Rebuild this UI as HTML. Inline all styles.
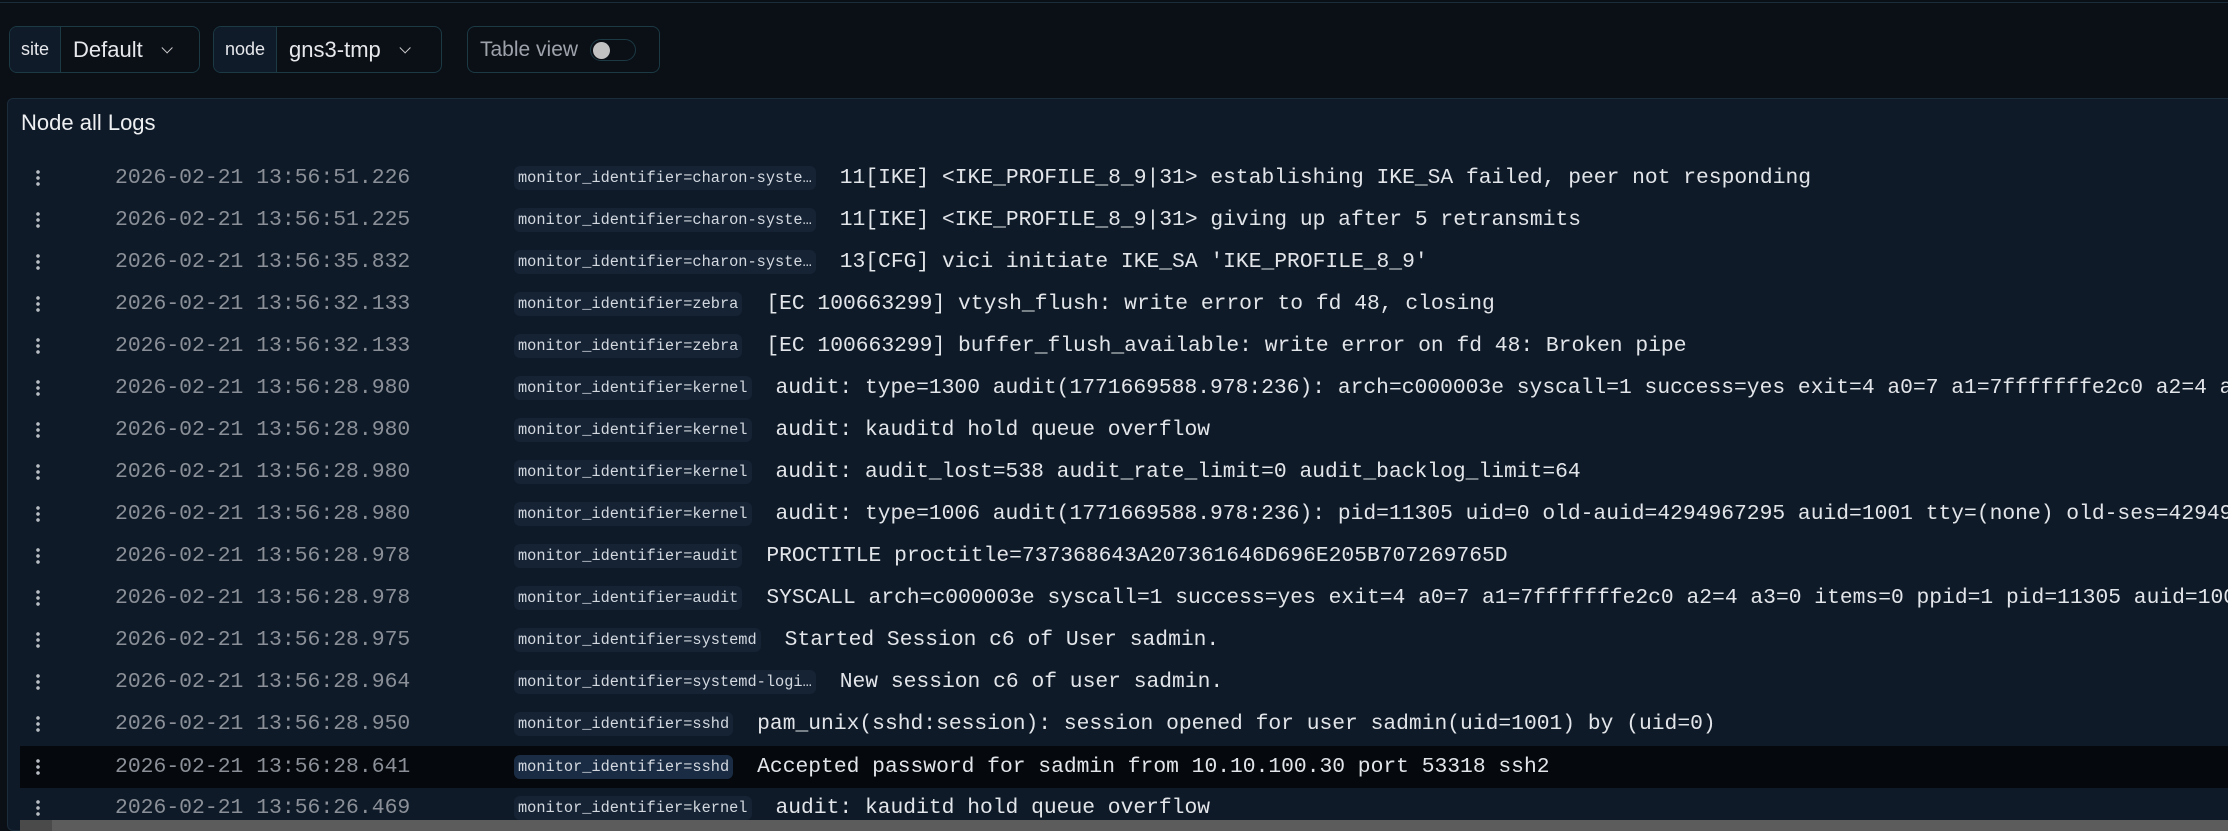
<!DOCTYPE html>
<html><head><meta charset="utf-8"><style>
*{box-sizing:border-box;margin:0;padding:0}
html,body{width:2228px;height:831px;overflow:hidden}
body{background:#0b0f16;font-family:"Liberation Sans",sans-serif;color:#e6e8eb;position:relative}
.topline{position:absolute;left:0;top:0;width:2228px;height:3px;border-bottom:1px solid #1b2c3a}
.ctl{position:absolute;top:26px;height:47px;border:1px solid #1b3a44;border-radius:8px;display:flex;align-items:center;overflow:hidden;background:#0b0f16}
.lab{height:100%;background:#101b29;border-right:1px solid #1b3a44;display:flex;align-items:center;padding:0 11px;font-size:18px;color:#e6e8eb}
.val{padding:0 12px;font-size:22px;color:#e6e8eb;display:flex;align-items:center;gap:18px}
.chev{width:8px;height:8px;border-right:1.6px solid #ccc;border-bottom:1.6px solid #ccc;transform:rotate(45deg) translateY(-3px)}
.panel{position:absolute;left:7px;top:98px;width:2240px;height:733px;background:#0f1a28;border:1px solid #1b2c3a;border-radius:6px}
.title{position:absolute;left:13px;top:11px;font-size:22px;color:#eef0f2}
.row{position:absolute;left:20px;width:2230px;height:42px;display:flex;align-items:center;white-space:nowrap;font-family:"Liberation Mono",monospace}
.row.hl{background:#05080c}
.dots{position:absolute;left:16px;top:12px;width:4px;height:18px;background:radial-gradient(circle,#b9bec5 1.6px,transparent 2px) 0 0/4px 6px repeat-y}
.ts{position:absolute;left:95px;font-size:21.4px;color:#8b9098}
.tag{position:absolute;left:494px;display:flex;align-items:center;white-space:nowrap}
.tg{font-size:15.3px;color:#d4d9e0;padding:3px 4px;border-radius:6px;background:#152335}
.hl .tg{background:#1a2c44}
.msg{margin-left:24px;font-size:21.3px;color:#e2e5e9}
.sb{position:absolute;left:20px;top:820px;width:2208px;height:11px;background:#5c5c5c}
.sb:before{content:"";position:absolute;left:0;top:0;width:32px;height:11px;background:#4a4a4a}
</style></head><body>
<div class="topline"></div>
<div class="ctl" style="left:9px;width:191px"><div class="lab">site</div><div class="val">Default<span class="chev"></span></div></div>
<div class="ctl" style="left:213px;width:229px"><div class="lab">node</div><div class="val">gns3-tmp<span class="chev"></span></div></div>
<div class="ctl" style="left:467px;width:193px;padding-left:12px"><span style="font-size:21px;color:#9ea3ab">Table view</span><span style="margin-left:12px;width:46px;height:22px;border:1px solid #1b3a44;border-radius:11px;position:relative;display:inline-block"><span style="position:absolute;left:2px;top:2px;width:17px;height:17px;border-radius:50%;background:#c2c2c2"></span></span></div>
<div class="panel"><div class="title">Node all Logs</div></div>
<div class="row" style="top:157px"><div class="dots"></div><span class="ts">2026-02-21 13:56:51.226</span><span class="tag"><span class="tg">monitor_identifier=charon-syste…</span><span class="msg">11[IKE] &lt;IKE_PROFILE_8_9|31&gt; establishing IKE_SA failed, peer not responding</span></span></div>
<div class="row" style="top:199px"><div class="dots"></div><span class="ts">2026-02-21 13:56:51.225</span><span class="tag"><span class="tg">monitor_identifier=charon-syste…</span><span class="msg">11[IKE] &lt;IKE_PROFILE_8_9|31&gt; giving up after 5 retransmits</span></span></div>
<div class="row" style="top:241px"><div class="dots"></div><span class="ts">2026-02-21 13:56:35.832</span><span class="tag"><span class="tg">monitor_identifier=charon-syste…</span><span class="msg">13[CFG] vici initiate IKE_SA 'IKE_PROFILE_8_9'</span></span></div>
<div class="row" style="top:283px"><div class="dots"></div><span class="ts">2026-02-21 13:56:32.133</span><span class="tag"><span class="tg">monitor_identifier=zebra</span><span class="msg">[EC 100663299] vtysh_flush: write error to fd 48, closing</span></span></div>
<div class="row" style="top:325px"><div class="dots"></div><span class="ts">2026-02-21 13:56:32.133</span><span class="tag"><span class="tg">monitor_identifier=zebra</span><span class="msg">[EC 100663299] buffer_flush_available: write error on fd 48: Broken pipe</span></span></div>
<div class="row" style="top:367px"><div class="dots"></div><span class="ts">2026-02-21 13:56:28.980</span><span class="tag"><span class="tg">monitor_identifier=kernel</span><span class="msg">audit: type=1300 audit(1771669588.978:236): arch=c000003e syscall=1 success=yes exit=4 a0=7 a1=7fffffffe2c0 a2=4 a3=0</span></span></div>
<div class="row" style="top:409px"><div class="dots"></div><span class="ts">2026-02-21 13:56:28.980</span><span class="tag"><span class="tg">monitor_identifier=kernel</span><span class="msg">audit: kauditd hold queue overflow</span></span></div>
<div class="row" style="top:451px"><div class="dots"></div><span class="ts">2026-02-21 13:56:28.980</span><span class="tag"><span class="tg">monitor_identifier=kernel</span><span class="msg">audit: audit_lost=538 audit_rate_limit=0 audit_backlog_limit=64</span></span></div>
<div class="row" style="top:493px"><div class="dots"></div><span class="ts">2026-02-21 13:56:28.980</span><span class="tag"><span class="tg">monitor_identifier=kernel</span><span class="msg">audit: type=1006 audit(1771669588.978:236): pid=11305 uid=0 old-auid=4294967295 auid=1001 tty=(none) old-ses=4294967295</span></span></div>
<div class="row" style="top:535px"><div class="dots"></div><span class="ts">2026-02-21 13:56:28.978</span><span class="tag"><span class="tg">monitor_identifier=audit</span><span class="msg">PROCTITLE proctitle=737368643A207361646D696E205B707269765D</span></span></div>
<div class="row" style="top:577px"><div class="dots"></div><span class="ts">2026-02-21 13:56:28.978</span><span class="tag"><span class="tg">monitor_identifier=audit</span><span class="msg">SYSCALL arch=c000003e syscall=1 success=yes exit=4 a0=7 a1=7fffffffe2c0 a2=4 a3=0 items=0 ppid=1 pid=11305 auid=1001</span></span></div>
<div class="row" style="top:619px"><div class="dots"></div><span class="ts">2026-02-21 13:56:28.975</span><span class="tag"><span class="tg">monitor_identifier=systemd</span><span class="msg">Started Session c6 of User sadmin.</span></span></div>
<div class="row" style="top:661px"><div class="dots"></div><span class="ts">2026-02-21 13:56:28.964</span><span class="tag"><span class="tg">monitor_identifier=systemd-logi…</span><span class="msg">New session c6 of user sadmin.</span></span></div>
<div class="row" style="top:703px"><div class="dots"></div><span class="ts">2026-02-21 13:56:28.950</span><span class="tag"><span class="tg">monitor_identifier=sshd</span><span class="msg">pam_unix(sshd:session): session opened for user sadmin(uid=1001) by (uid=0)</span></span></div>
<div class="row hl" style="top:746px"><div class="dots"></div><span class="ts">2026-02-21 13:56:28.641</span><span class="tag"><span class="tg">monitor_identifier=sshd</span><span class="msg">Accepted password for sadmin from 10.10.100.30 port 53318 ssh2</span></span></div>
<div class="row" style="top:787px"><div class="dots"></div><span class="ts">2026-02-21 13:56:26.469</span><span class="tag"><span class="tg">monitor_identifier=kernel</span><span class="msg">audit: kauditd hold queue overflow</span></span></div>
<div class="sb"></div>
</body></html>
